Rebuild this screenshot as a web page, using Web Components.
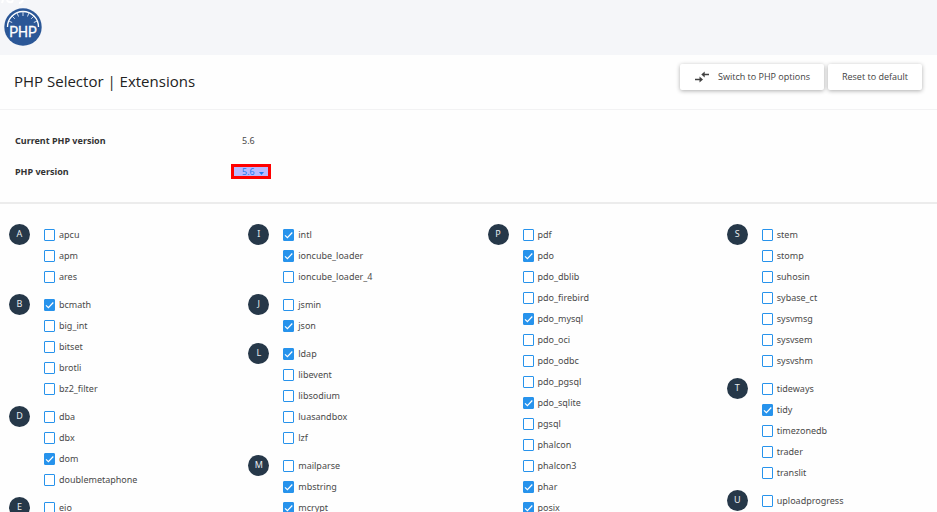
<!DOCTYPE html>
<html lang="en">
<head>
<meta charset="utf-8">
<title>PHP Selector</title>
<style>
html { scrollbar-width: none; }
body { margin: 0; background: #fefefe; color: #4a4a4a; font-family: "Open Sans", "Noto Sans", sans-serif; font-size: 9px; line-height: 14px; }
</style>
</head>
<body>
<selector-app></selector-app>
<script>
class Base extends HTMLElement {
  render(html) {
    if (!this.shadowRoot) this.attachShadow({ mode: 'open' });
    this.shadowRoot.innerHTML = html;
  }
}

customElements.define('php-logo', class extends Base {
  connectedCallback() {
    this.render(`<style>:host{display:block} svg{display:block}</style>
    <svg width="44" height="48" viewBox="0 0 44 48" role="img" aria-label="PHP">
      <path d="M3 0L2 3M7 0q1 3 5 2l1-2M19 3q3 0 4-3" fill="none" stroke="#fff" stroke-width="2"/>
      <circle cx="23" cy="27" r="18.7" fill="#2b5797"/>
      <path d="M7.500 27a15.500 15.500 0 0 1 31 0" fill="none" stroke="#fff" stroke-width="1.300"/>
      <path d="M23 11.500v4.500M17 12.700l1.500 3.800M29 12.700l-1.500 3.800M12 16l2.800 2.800M34 16l-2.800 2.800M8.700 21l3.500 1.500M37.300 21l-3.500 1.500" fill="none" stroke="#d7e0ee" stroke-width="1"/>
      <text x="23" y="37" text-anchor="middle" font-family="Liberation Sans Narrow, Roboto, sans-serif" font-size="14" fill="#fff" stroke="#fff" stroke-width=".3">PHP</text>
    </svg>`);
  }
});

customElements.define('raised-button', class extends Base {
  connectedCallback() {
    this.render(`<style>:host{display:block}
    button{display:flex;align-items:center;gap:8px;height:26px;padding:0 14px;border:0;border-radius:2px;background:#fff;color:#424242;font:inherit;white-space:nowrap;box-shadow:0 1px 4px rgba(0,0,0,.32)}
    ::slotted(svg){display:block}</style>
    <button type="button"><slot name="icon"></slot><slot></slot></button>`);
  }
});

customElements.define('page-title', class extends Base {
  connectedCallback() {
    this.render(`<style>:host{display:flex;align-items:center;justify-content:space-between;padding:9px 15px 11px 14px;height:34px;border-bottom:1px solid #f2f2f3}
    h1{margin:0;font-size:15px;line-height:20px;font-weight:400;color:#222}
    div{display:flex;gap:4px;align-self:flex-start}</style>
    <h1><slot></slot></h1><div><slot name="actions"></slot></div>`);
  }
});

customElements.define('version-panel', class extends Base {
  connectedCallback() {
    this.render(`<style>:host{display:block;padding:23px 15px;border-bottom:2px solid #ececec;font-family:"Noto Sans",sans-serif}
    .row{display:grid;grid-template-columns:216px 1fr;align-items:center;min-height:15px}
    .row + .row{margin-top:16px}
    .name{font-weight:700;color:#333}
    .value{padding-left:11px}
    .pick{position:relative;justify-self:start;display:flex}
    select{appearance:none;width:40px;height:15px;box-sizing:border-box;margin:0;border:3px solid #f00;border-radius:0;padding:0 0 0 8px;background:#b9b9ff;color:#1e7af0;font:inherit;line-height:9px}
    svg{position:absolute;right:7px;top:8px;pointer-events:none}</style>
    <div class="row"><span class="name">Current PHP version</span><span class="value">5.6</span></div>
    <div class="row"><label class="name" for="v">PHP version</label><span class="pick"><select id="v"><option>5.6</option></select>
    <svg width="5" height="3" viewBox="0 0 5 3"><path d="M0 0h5L2.500 3z" fill="#1e7af0"/></svg></span></div>`);
  }
});

customElements.define('ext-item', class extends Base {
  connectedCallback() {
    this.render(`<style>:host{display:flex;height:21px}
    label{display:flex;align-items:center;gap:4px;line-height:20px}
    input{appearance:none;box-sizing:border-box;width:11px;height:12px;margin:1px 0 0;border:1px solid #2793ec;border-radius:1px;background:#fff}
    input:checked{background:#2793ec url("data:image/svg+xml,%3Csvg xmlns='http://www.w3.org/2000/svg' viewBox='0 0 11 12'%3E%3Cpath d='M2 6.300l2.400 2.400L9.300 3.500' fill='none' stroke='white' stroke-width='1.200'/%3E%3C/svg%3E") center/11px 12px no-repeat}</style>
    <label><input type="checkbox"${this.hasAttribute('checked') ? ' checked' : ''}><slot></slot></label>`);
  }
});

customElements.define('ext-group', class extends Base {
  connectedCallback() {
    this.render(`<style>:host{display:flex;gap:14px}
    .badge{flex:none;width:21px;height:21px;border-radius:50%;background:#263849;color:#e8ecef;line-height:20px;text-align:center}</style>
    <div class="badge">${this.getAttribute('letter')}</div><div><slot></slot></div>`);
  }
});

const columns = [
  ['A apcu apm ares', 'B *bcmath big_int bitset brotli bz2_filter', 'D dba dbx *dom doublemetaphone', 'E eio'],
  ['I *intl *ioncube_loader ioncube_loader_4', 'J jsmin *json', 'L *ldap libevent libsodium luasandbox lzf', 'M mailparse *mbstring *mcrypt'],
  ['P pdf *pdo pdo_dblib pdo_firebird *pdo_mysql pdo_oci pdo_odbc pdo_pgsql *pdo_sqlite pgsql phalcon phalcon3 *phar *posix'],
  ['S stem stomp suhosin sybase_ct sysvmsg sysvsem sysvshm', 'T tideways *tidy timezonedb trader translit', 'U uploadprogress']
];

customElements.define('ext-list', class extends Base {
  connectedCallback() {
    const group = g => {
      const [letter, ...names] = g.split(' ');
      return `<ext-group letter="${letter}">${names.map(n =>
        `<ext-item${n[0] === '*' ? ' checked' : ''}>${n.replace('*', '')}</ext-item>`).join('')}</ext-group>`;
    };
    this.render(`<style>:host{display:grid;grid-template-columns:repeat(4,1fr);column-gap:38px;padding:20px 9px 0;font-family:"Noto Sans",sans-serif}
    .col{display:flex;flex-direction:column;gap:7px;min-width:0}</style>
    ${columns.map(c => `<div class="col">${c.map(group).join('')}</div>`).join('')}`);
  }
});

customElements.define('selector-app', class extends Base {
  connectedCallback() {
    this.render(`<style>:host{display:block} header{background:#f5f6f9;padding-bottom:7px}</style>
    <header><php-logo></php-logo></header>
    <page-title>PHP Selector | Extensions
      <raised-button slot="actions"><svg slot="icon" width="16" height="12" viewBox="0 0 16 12"><path d="M1 7.800h4.500V5.500L9 8.500 5.500 11.500V9.200H1zM15 2.800h-4.300V.5L7.300 3.500l3.400 3V4.200H15z" fill="#424242"/></svg>Switch to PHP options</raised-button>
      <raised-button slot="actions">Reset to default</raised-button>
    </page-title>
    <version-panel></version-panel>
    <ext-list></ext-list>`);
  }
});
</script>
</body>
</html>
